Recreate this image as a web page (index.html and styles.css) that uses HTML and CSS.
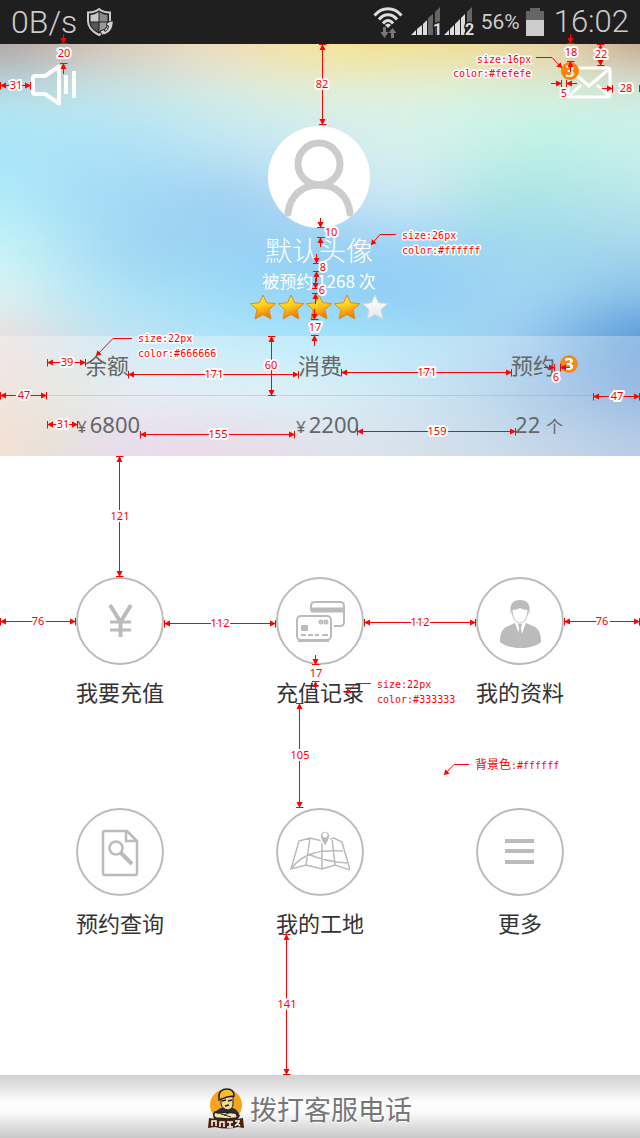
FILE: index.html
```html
<!DOCTYPE html>
<html lang="zh-CN">
<head>
<meta charset="utf-8">
<meta name="viewport" content="width=device-width, initial-scale=1">
<title>个人中心</title>
<link rel="stylesheet" href="styles.css">
</head>
<body>
<div class="page">
  <header class="status">
    <span class="status-large">0B/s</span>
    <svg class="shield" width="28" height="30" viewBox="0 0 28 30" aria-hidden="true">
      <path d="M14 2C11 4.500 7 5.500 3 5.500V14c0 7 5 11 11 14 6-3 11-7 11-14V5.500C21 5.500 17 4.500 14 2z" fill="#222" stroke="#ccc" stroke-width="2"/>
      <path d="M13.500 5C11 7 8 8 5.500 8v6.500h8z" fill="#c8c8c8"/>
      <path d="M14.500 5C17 7 20 8 22.500 8v6.500h-8z" fill="#8a8a8a"/>
      <path d="M5.500 15.500h8v9.500c-5-2.500-8-5.500-8-9.500z" fill="#555"/>
      <path d="M14.500 15.500h8c0 4-3 7-8 9.500z" fill="#999"/>
      <path d="M22 15.500l6-2c1 8-4 14-11 14.500l-2-4 4-1.500 1 2c2-1 3.500-3 3.500-5.500l-2-1z" fill="#d2d2d2" stroke="#222" stroke-width="1"/>
    </svg>
    <span class="status-right">
      <svg class="wifi" width="30" height="32" viewBox="0 0 30 32" aria-hidden="true">
        <g fill="none" stroke="#ddd" stroke-width="3"><path d="M1.500 9.500C9 .5 21 .5 28.500 9.500"/><path d="M6 13.500c5-6.500 13-6.500 18 0"/><path d="M10 17.500c3-4 7-4 10 0"/></g>
        <path d="M12 19c2-2 4-2 6 0l-3 3z" fill="#ddd"/>
        <path d="M10 21h3v5h2.500L11.500 32 7.500 26H10zM18 32h3v-5h2.500L19.500 22l-4 5H18z" fill="#777"/>
      </svg>
      <svg class="signals" width="64" height="32" viewBox="0 0 64 32" aria-hidden="true">
        <g fill="#ddd"><path d="M0 29l5-5v5zM6 23l5-4v10H6zM12 18l4-4v15h-4zM33 29l5-5v5zM39 23l4-4v10h-4zM44 18l5-5v16h-5zM50 12l4-4v21h-4z"/></g>
        <path d="M17 12l5-4v21h-5zM24 6l5-5v28h-5zM56 6l5-5v28h-5z" fill="#666"/>
        <g fill="#ddd" stroke="#1f1f1f" stroke-width="3" paint-order="stroke" class="sim"><text x="22" y="29">1</text><text x="54" y="29">2</text></g>
      </svg>
      <span class="status-small">56%</span>
      <svg class="battery" width="18" height="28" viewBox="0 0 18 28" aria-hidden="true"><path d="M0 3h4V0h10v3h4v9H0z" fill="#666"/><path d="M0 12h18v16H0z" fill="#ccc"/></svg>
      <span class="status-time">16:02</span>
    </span>
  </header>

  <section class="hero">
    <svg class="hero-sky" viewBox="0 0 640 412" preserveAspectRatio="none" aria-hidden="true">
      <defs>
        <filter id="soft" filterUnits="userSpaceOnUse" x="-100" y="-100" width="840" height="612" color-interpolation-filters="sRGB"><feGaussianBlur stdDeviation="24 22"/></filter>
        <linearGradient id="s0" gradientUnits="userSpaceOnUse" x1="0" x2="640" y1="0" y2="0"><stop offset="0" stop-color="#b09c9a"/><stop offset=".16" stop-color="#dac2b0"/><stop offset=".33" stop-color="#f0dabc"/><stop offset=".5" stop-color="#f7e190"/><stop offset=".7" stop-color="#f4da88"/><stop offset=".88" stop-color="#edd09c"/><stop offset="1" stop-color="#c09880"/></linearGradient>
        <linearGradient id="s1" gradientUnits="userSpaceOnUse" x1="0" x2="640" y1="0" y2="0"><stop offset="0" stop-color="#b4c4ca"/><stop offset=".16" stop-color="#cdd8d6"/><stop offset=".33" stop-color="#e2e6d4"/><stop offset=".5" stop-color="#efe9bd"/><stop offset=".7" stop-color="#e8ecc4"/><stop offset="1" stop-color="#d6d6c4"/></linearGradient>
        <linearGradient id="s2" gradientUnits="userSpaceOnUse" x1="0" x2="640" y1="0" y2="0"><stop offset="0" stop-color="#b4e8f2"/><stop offset=".2" stop-color="#bee8f0"/><stop offset=".4" stop-color="#d4eeea"/><stop offset=".6" stop-color="#dcf2e6"/><stop offset=".8" stop-color="#d0f5e7"/><stop offset="1" stop-color="#cef1e8"/></linearGradient>
        <linearGradient id="s3" gradientUnits="userSpaceOnUse" x1="0" x2="640" y1="0" y2="0"><stop offset="0" stop-color="#a8e4f8"/><stop offset=".22" stop-color="#aee0f6"/><stop offset=".4" stop-color="#c4e6f3"/><stop offset=".62" stop-color="#d8f0ee"/><stop offset=".86" stop-color="#baf0e4"/><stop offset="1" stop-color="#c8f0ea"/></linearGradient>
        <linearGradient id="s4" gradientUnits="userSpaceOnUse" x1="0" x2="640" y1="0" y2="0"><stop offset="0" stop-color="#b2ecf8"/><stop offset=".12" stop-color="#a6def7"/><stop offset=".35" stop-color="#9ccef2"/><stop offset=".62" stop-color="#cee8f5"/><stop offset=".8" stop-color="#a9e2e6"/><stop offset="1" stop-color="#b8e6ec"/></linearGradient>
        <linearGradient id="s5" gradientUnits="userSpaceOnUse" x1="0" x2="640" y1="0" y2="0"><stop offset="0" stop-color="#c8f5f7"/><stop offset=".2" stop-color="#a0d6f3"/><stop offset=".45" stop-color="#95cff4"/><stop offset=".65" stop-color="#9ad2f5"/><stop offset=".85" stop-color="#9fd9ec"/><stop offset="1" stop-color="#a6d4ee"/></linearGradient>
        <linearGradient id="s6" gradientUnits="userSpaceOnUse" x1="0" x2="640" y1="0" y2="0"><stop offset="0" stop-color="#def3f3"/><stop offset=".16" stop-color="#b2e6f6"/><stop offset=".38" stop-color="#98daf8"/><stop offset=".62" stop-color="#8ecbf5"/><stop offset=".82" stop-color="#a5d6f4"/><stop offset="1" stop-color="#88c0ea"/></linearGradient>
        <linearGradient id="s7" gradientUnits="userSpaceOnUse" x1="0" x2="640" y1="0" y2="0"><stop offset="0" stop-color="#eedcdc"/><stop offset=".16" stop-color="#c4e2f0"/><stop offset=".36" stop-color="#aee4fa"/><stop offset=".56" stop-color="#a4e6fa"/><stop offset=".8" stop-color="#9dcef0"/><stop offset="1" stop-color="#5496d6"/></linearGradient>
        <linearGradient id="s8" gradientUnits="userSpaceOnUse" x1="0" x2="640" y1="0" y2="0"><stop offset="0" stop-color="#efd8cf"/><stop offset=".08" stop-color="#dedfd2"/><stop offset=".22" stop-color="#dee7f2"/><stop offset=".47" stop-color="#cdecf5"/><stop offset=".7" stop-color="#b0d6ec"/><stop offset="1" stop-color="#6c9ad6"/></linearGradient>
        <linearGradient id="s9" gradientUnits="userSpaceOnUse" x1="0" x2="640" y1="0" y2="0"><stop offset="0" stop-color="#f2d3c4"/><stop offset=".08" stop-color="#dbd6c2"/><stop offset=".16" stop-color="#decde7"/><stop offset=".32" stop-color="#e4cade"/><stop offset=".55" stop-color="#d1d8e4"/><stop offset=".78" stop-color="#b6cde1"/><stop offset="1" stop-color="#9ab8db"/></linearGradient>
      </defs>
      <g filter="url(#soft)">
        <rect x="-100" y="-100" width="840" height="113" fill="url(#s0)"/>
        <rect x="-100" y="13" width="840" height="28" fill="url(#s1)"/>
        <rect x="-100" y="41" width="840" height="40" fill="url(#s2)"/>
        <rect x="-100" y="81" width="840" height="50" fill="url(#s3)"/>
        <rect x="-100" y="131" width="840" height="50" fill="url(#s4)"/>
        <rect x="-100" y="181" width="840" height="50" fill="url(#s5)"/>
        <rect x="-100" y="231" width="840" height="42" fill="url(#s6)"/>
        <rect x="-100" y="273" width="840" height="50" fill="url(#s7)"/>
        <rect x="-100" y="323" width="840" height="52" fill="url(#s8)"/>
        <rect x="-100" y="375" width="840" height="137" fill="url(#s9)"/>
      </g>
    </svg>

    <div class="toolbar">
      <button class="icon-btn" type="button" aria-label="公告">
        <svg width="46" height="42" viewBox="0 0 46 42" fill="none" stroke="#fff" stroke-width="4">
          <path d="M2 14q0-2 2-2h10L28 2.500v37L14 30H4q-2 0-2-2z" stroke-linejoin="round"/>
          <path d="M35 11v19M43 7v27"/>
        </svg>
      </button>
      <button class="icon-btn mail" type="button" aria-label="消息">
        <svg width="46" height="33" viewBox="0 0 46 33" fill="none" stroke="#fff" stroke-width="3">
          <rect x="2" y="2" width="42" height="29" rx="2"/><path d="M3 3l20 17L43 3M3 30l12-11M43 30L31 19"/>
        </svg>
        <span class="badge mail-badge">3</span>
      </button>
    </div>

    <div class="profile">
      <svg class="avatar" width="102" height="102" viewBox="0 0 102 102" aria-hidden="true">
        <circle cx="51" cy="51" r="51" fill="#fff"/>
        <g fill="none" stroke="#ccc" stroke-width="7" stroke-linecap="round"><circle cx="51" cy="38" r="21"/><path d="M20 87c2-18 15-28 31-28s29 10 31 28"/></g>
      </svg>
      <h1 class="name">默认头像</h1>
      <p class="booked">被预约 1268 次</p>
      <div class="stars" role="img" aria-label="4 / 5">
        <svg viewBox="0 0 26 26"><defs>
          <linearGradient id="gold" x1="0" y1="0" x2=".3" y2="1"><stop offset="0" stop-color="#fff04a"/><stop offset=".5" stop-color="#ffd21c"/><stop offset="1" stop-color="#f07c08"/></linearGradient>
          <linearGradient id="silver" x1="0" y1="0" x2="0" y2="1"><stop offset="0" stop-color="#fff"/><stop offset="1" stop-color="#e4e8ee"/></linearGradient>
          <path id="star" d="M13 1l3.500 7.700 9 1-6.500 6 2 9.300L13 20.500 5 25l2-9.300-6.500-6 9-1z" stroke-linejoin="round"/>
        </defs><use href="#star" fill="url(#gold)" stroke="#dd8a20"/></svg>
        <svg viewBox="0 0 26 26"><use href="#star" fill="url(#gold)" stroke="#dd8a20"/></svg>
        <svg viewBox="0 0 26 26"><use href="#star" fill="url(#gold)" stroke="#dd8a20"/></svg>
        <svg viewBox="0 0 26 26"><use href="#star" fill="url(#gold)" stroke="#dd8a20"/></svg>
        <svg viewBox="0 0 26 26"><use href="#star" fill="url(#silver)" stroke="#cdd6de"/></svg>
      </div>
    </div>

    <div class="stats">
      <div class="stat-labels">
        <span>余额</span><span>消费</span>
        <span class="with-badge">预约<span class="badge stat-badge">3</span></span>
      </div>
      <div class="stat-values">
        <span class="money"><small>¥</small>6800</span><span class="money"><small>¥</small>2200</span><span>22 <small>个</small></span>
      </div>
    </div>
  </section>

  <nav class="menu">
    <a class="item" href="#">
      <span class="ring"><svg width="60" height="60" viewBox="0 0 60 60" fill="none" stroke="#bbb" stroke-width="3"><path d="M20 14l10.500 17L41 14" stroke-width="4"/><path d="M30.500 30v16" stroke-width="4"/><path d="M20 31h21M20 39h21"/></svg></span>
      <span class="label">我要充值</span>
    </a>
    <a class="item" href="#">
      <span class="ring"><svg width="60" height="60" viewBox="0 0 60 60" fill="none" stroke="#bbb" stroke-width="2"><path d="M21 20v-5q0-4 4-4h25q4 0 4 4v16q0 4-4 4h-6"/><path d="M21 19h33" stroke-width="5"/><rect x="7" y="25" width="34" height="24" rx="4"/><path d="M8 50h31"/><rect x="11" y="34" width="7" height="6" rx="1" fill="#bbb" stroke="none"/><path d="M11 44h5M18 44h5M25 44h4M32 44h6"/><circle cx="31" cy="31" r="1.500"/><circle cx="36" cy="31" r="1.500"/></svg></span>
      <span class="label">充值记录</span>
    </a>
    <a class="item" href="#">
      <span class="ring"><svg width="60" height="60" viewBox="0 0 60 60" fill="#bbb"><path d="M21 24C19 14 22 9 30 9s11 5 9 15l-1-5c-3 0-6-1-8-2-2 1-5 2-8 2z"/><path d="M22 18c0 7 3 14 8 14s8-7 8-14" fill="none" stroke="#bbb"/><path d="M25 32l-9 4c-5 3-6 9-6 15 9 8 32 8 41 0 0-6-1-12-6-15l-9-4-5 13z"/><path d="M25 31l5 16 5-16-5 3z" fill="#fff"/><path d="M28 33h4l-1 4 1 7-2 3-2-3 1-7z"/></svg></span>
      <span class="label">我的资料</span>
    </a>
    <a class="item" href="#">
      <span class="ring"><svg width="60" height="60" viewBox="0 0 60 60" fill="none" stroke="#bbb" stroke-width="2"><path d="M15 9h22l10 10v32q0 2-2 2H15q-2 0-2-2V11q0-2 2-2zM36 10v9h10" stroke-width="2.500"/><circle cx="26" cy="26" r="6.500" stroke-width="2.500"/><path d="M31 31l11 11" stroke-width="4"/></svg></span>
      <span class="label">预约查询</span>
    </a>
    <a class="item" href="#">
      <span class="ring"><svg width="60" height="60" viewBox="0 0 60 60" fill="none" stroke="#bbb" stroke-width="1.500"><path d="M9 19l11-3 12 3 12-3 8 4 8 28-15-5-13 4-16-4-15 4zM20 16l-4 27M32 19v28M42 16l3 27M1 47c12-17 30-19 52-18M18 32c9 4 20 8 39 9"/><path d="M35 25c-3-5-5-8-5-11a5 5 0 0110 0c0 3-2 6-5 11z" fill="#bbb" stroke="#fff"/><circle cx="35" cy="13" r="2.500" fill="#fff" stroke="none"/></svg></span>
      <span class="label">我的工地</span>
    </a>
    <a class="item" href="#">
      <span class="ring"><svg width="60" height="60" viewBox="0 0 60 60" fill="none" stroke="#bbb" stroke-width="4"><path d="M15 19h29M15 29h29M15 40h29"/></svg></span>
      <span class="label">更多</span>
    </a>
  </nav>

  <button class="call" type="button">
    <svg width="36" height="42" viewBox="0 0 36 42" aria-hidden="true">
      <circle cx="18" cy="17" r="16" fill="#f7a51c"/>
      <path d="M5 26q5-5 8-6h12q5 2 7 8l-3 4H6z" fill="#27323a"/>
      <path d="M13 8h12v8q0 5-5 6-6-1-7-6z" fill="#f8d48c" stroke="#222"/>
      <path d="M11 10c-1-6 3-9 8-9 5 0 7 3 7 7l-7 1-8 3z" fill="#ffbd20" stroke="#222" stroke-width="1.500"/>
      <path d="M14 13l4-1M20 13l4-1M17 18l4-1" stroke="#222" stroke-width="1.500"/>
      <path d="M7 24c4 2 7 1 10 0l10 1q4 3 1 5l-8 1-12-1q-4-2-1-6z" fill="#fde0ac" stroke="#222" stroke-width="1.500"/>
      <path d="M13 26l10 3M23 24l-7 3" stroke="#222"/>
      <path d="M1 30q17 3 34 0l1 10-6-1q-12 3-23 0l-7 1z" fill="#4a210c"/>
      <path d="M4 38v-5h4v5M12 39v-5h4v5M19 34h6M22 34v5M19 39h6M27 33h5M27 38l4-4M32 38l-3-3" fill="none" stroke="#fff" stroke-width="1.500"/>
    </svg>
    <span>拨打客服电话</span>
  </button>

  <svg class="notes" viewBox="0 0 640 1138" preserveAspectRatio="xMidYMin meet">
    <defs>
      <marker id="tip" markerUnits="userSpaceOnUse" markerWidth="8" markerHeight="8" refX="6" refY="4" orient="auto-start-reverse"><path d="M0 1l6 3-6 3zM5 0h1v8H5z" fill="#f00"/></marker>
      <marker id="head" markerUnits="userSpaceOnUse" markerWidth="8" markerHeight="8" refX="6" refY="4" orient="auto"><path d="M1 1l5 3-5 3z" fill="#f00"/></marker>
    </defs>
    <g class="dims" shape-rendering="crispEdges">
      <path class="both" d="M0 85.500H31"/><path class="both" d="M322.500 44V125"/>
      <path class="both" d="M0 395.500H47"/><path class="both" d="M593 396.500H640"/>
      <path class="both" d="M47 362.500H86"/><path class="both" d="M128 374.500H299"/><path class="both" d="M341 372.500H512"/>
      <path class="both" d="M271.500 336V396"/>
      <path class="both" d="M47 424.500H78"/><path class="both" d="M140 434.500H295"/><path class="both" d="M357 431.500H516"/>
      <path class="both" d="M119.500 456V577"/>
      <path class="both" d="M0 621.500H76"/><path class="both" d="M164 623.500H276"/><path class="both" d="M364 622.500H476"/><path class="both" d="M564 621.500H640"/>
      <path class="both" d="M299.500 703V808"/><path class="both" d="M286.500 934V1075"/><path class="both" d="M600.500 44V66"/>
      <path class="one" d="M63.500 34V44"/><path class="one" d="M63.500 74V63"/>
      <path class="one" d="M570.500 34V44"/><path class="one" d="M570.500 72V61"/>
      <path class="one" d="M602 88.500H613"/><path d="M639.500 85V92"/>
      <path class="one" d="M551 83.500H562"/><path class="one" d="M577 83.500H566"/>
      <path class="one" d="M320.500 218V228"/><path class="one" d="M320.500 247V237"/>
      <path class="one" d="M316.500 254V264"/><path class="one" d="M316.500 282V271"/>
      <path class="one" d="M315.500 278V289"/><path class="one" d="M315.500 304V293"/>
      <path class="one" d="M314.500 309V320"/><path class="one" d="M314.500 346V335"/>
      <path class="one" d="M544 367.500H555"/><path class="one" d="M570 367.500H560"/>
      <path class="one" d="M315.500 655V665"/><path class="one" d="M315.500 692V681"/>
    </g>
    <g class="leaders">
      <path d="M536 57.500H552L562 68"/><path d="M396 234.500H380L371 245"/><path d="M132 338.500H113L96 356"/><path d="M371 683.500H356L346 694"/><path d="M469 764.500H454L444 775"/>
    </g>
    <g class="nums">
      <text x="64" y="57">20</text><text x="16" y="89">31</text><text x="322" y="88">82</text><text x="571" y="56">18</text><text x="601" y="58">22</text><text x="626" y="92">28</text><text x="564" y="97">5</text>
      <text x="331" y="236">10</text><text x="323" y="271">8</text><text x="322" y="294">6</text><text x="315" y="331">17</text>
      <text x="67" y="366">39</text><text x="214" y="378">171</text><text x="427" y="376">171</text><text x="271" y="369">60</text><text x="556" y="381">6</text>
      <text x="24" y="399">47</text><text x="617" y="400">47</text><text x="63" y="428">31</text><text x="218" y="438">155</text><text x="437" y="435">159</text>
      <text x="120" y="520">121</text><text x="38" y="625">76</text><text x="220" y="627">112</text><text x="420" y="626">112</text><text x="602" y="625">76</text>
      <text x="316" y="677">17</text><text x="300" y="759">105</text><text x="287" y="1008">141</text>
    </g>
    <g class="specs">
      <text x="477" y="63">size:16px</text><text x="453" y="77">color:#fefefe</text>
      <text x="402" y="239">size:26px</text><text x="402" y="254">color:#ffffff</text>
      <text x="138" y="342">size:22px</text><text x="138" y="357">color:#666666</text>
      <text x="377" y="688">size:22px</text><text x="377" y="703">color:#333333</text>
      <text x="475" y="769"><tspan class="cjk">背景色</tspan>:#ffffff</text>
    </g>
  </svg>
</div>
</body>
</html>
```

FILE: styles.css
```css
* { box-sizing: border-box; }

body {
  margin: 0;
  background: #fff;
  color: #333;
  font-family: "Noto Sans", "Noto Sans CJK SC", sans-serif;
}

button {
  border: 0;
  padding: 0;
  background: none;
  font: inherit;
  cursor: pointer;
}

svg { display: block; }

.page {
  position: relative;
  display: flex;
  flex-direction: column;
  min-height: 100vh;
}

/* Status bar */
.status {
  display: flex;
  align-items: center;
  gap: 8px;
  height: 44px;
  padding: 0 11px;
  background: #1f1f1f;
  color: #ccc;
  font-family: Roboto, sans-serif;
  font-weight: 300;
  line-height: 44px;
}
.status-large { font-size: 32px; }
.status-time { font-size: 31px; }
.status-small { font-size: 21px; font-weight: 400; }
.status-right {
  display: flex;
  align-items: center;
  gap: 6px;
  margin-left: auto;
}
.wifi { margin-right: 2px; }
.battery { margin-right: 4px; }
.sim { font: 700 16px Roboto, sans-serif; }

/* Hero */
.hero {
  position: relative;
  overflow: hidden;
  padding-top: 20px;
}
.hero-sky {
  position: absolute;
  inset: 0;
  width: 100%;
  height: 100%;
}
.toolbar {
  position: relative;
  display: flex;
  justify-content: space-between;
  align-items: flex-start;
  height: 42px;
  padding: 0 28px 0 31px;
}
.icon-btn { position: relative; }
.mail { margin-top: 2px; }

.badge {
  position: absolute;
  width: 18px;
  height: 18px;
  border-radius: 50%;
  background: #ff8008;
  color: #fefefe;
  font-size: 16px;
  font-weight: 700;
  line-height: 18px;
  text-align: center;
}
.mail-badge { top: -4px; left: -5px; }
.stat-badge { top: 8px; left: 49px; background: #f08a24; }

.profile {
  position: relative;
  display: flex;
  flex-direction: column;
  align-items: center;
  padding: 20px 2px 16px 0;
  color: #fff;
}
.name {
  margin: 7px 0 4px;
  font-size: 27px;
  font-weight: 300;
  line-height: 32px;
}
.booked {
  margin: 0 0 3px;
  font-family: "Noto Sans CJK SC", sans-serif;
  font-size: 17px;
  line-height: 20px;
}
.stars { display: flex; gap: 2px; }
.stars svg { width: 26px; height: 26px; }

.stats {
  position: relative;
  background: rgba(255, 255, 255, .3);
  color: #666;
  font-size: 22px;
}
.stats::before {
  content: "";
  position: absolute;
  top: 59px;
  left: 47px;
  right: 47px;
  height: 1px;
  background: rgba(120, 140, 150, .25);
}
.stat-labels,
.stat-values {
  display: flex;
  justify-content: space-between;
  height: 60px;
}
.stat-labels { padding: 11px 85px; line-height: 36px; }
.stat-values { padding: 0 77px; line-height: 57px; }
.stat-values small { font-size: 17px; }
.money small { margin-right: 3px; }
.with-badge { position: relative; }

/* Menu */
.menu {
  flex: 1;
  display: grid;
  grid-template-columns: repeat(3, 1fr);
  align-content: start;
  row-gap: 100px;
  padding: 121px 20px;
}
.item {
  display: flex;
  flex-direction: column;
  align-items: center;
  gap: 11px;
  color: #333;
  text-decoration: none;
}
.ring {
  display: grid;
  place-items: center;
  width: 88px;
  height: 88px;
  border: 2px solid #bbb;
  border-radius: 50%;
}
.label { font-size: 22px; line-height: 32px; }

/* Call bar */
.call {
  display: flex;
  align-items: center;
  justify-content: center;
  gap: 6px;
  height: 63px;
  padding: 4px 20px 0 0;
  background: linear-gradient(#d0d0d0, #fff 45%, #fafafa 60%, #c8c8c8);
  color: #777;
  font-size: 27px;
  text-shadow: 0 1px 1px #fff, 1px 0 1px #fff;
}

/* Measurement notes */
.notes {
  position: absolute;
  inset: 0;
  width: 100%;
  height: 100%;
  pointer-events: none;
}
.dims path,
.leaders path { fill: none; stroke: #f00; }
.dims .both { marker-start: url(#tip); marker-end: url(#tip); }
.dims .one { marker-end: url(#tip); }
.leaders path { marker-end: url(#head); }
.nums text,
.specs text {
  fill: #f00;
  stroke: #fff;
  stroke-width: 3px;
  stroke-linejoin: round;
  paint-order: stroke;
}
.nums text { stroke-width: 4px; }
.nums { font: 11px "Noto Sans", sans-serif; text-anchor: middle; }
.specs { font: 10px "DejaVu Sans Mono", monospace; }
.cjk { font: 12px "Noto Sans CJK SC", sans-serif; }
```
